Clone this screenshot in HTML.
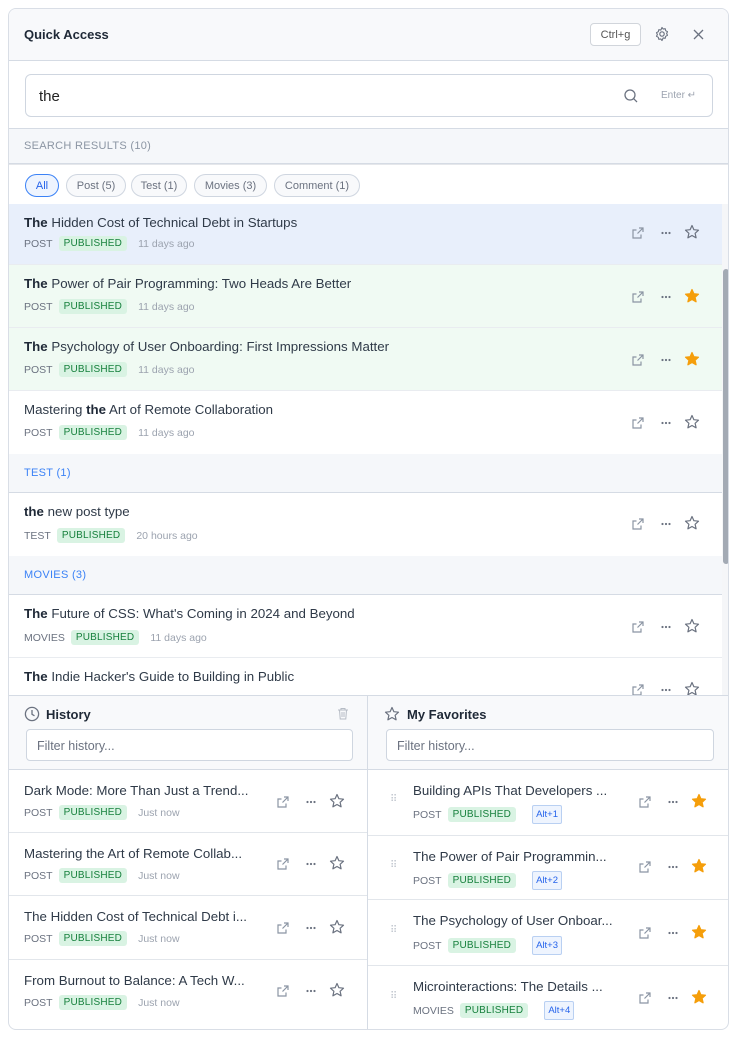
<!DOCTYPE html>
<html><head><meta charset="utf-8"><style>
*{box-sizing:border-box;margin:0;padding:0}
body{width:743px;height:1038px;background:#fff;font-family:"Liberation Sans",sans-serif;color:#374151;position:relative;overflow:hidden}
.panel{position:absolute;left:8px;top:8px;width:721px;height:1022px;border:1px solid #d9dee6;border-radius:8px;overflow:hidden;background:#fff}
.hdr{position:absolute;left:0;top:0;width:100%;height:52px;background:#f8f9fb;border-bottom:1px solid #d5dbe4}
.hdr .t{position:absolute;left:15px;top:18px;font-weight:bold;font-size:13px;color:#1f2937}
.kbd{position:absolute;left:581px;top:14px;width:51px;height:23px;border:1px solid #d1d5db;border-radius:4px;font-size:11px;color:#555;display:flex;align-items:center;justify-content:center;background:#fff}
.srch{position:absolute;left:0;top:52px;width:100%;height:68px;border-bottom:1px solid #d5dbe4}
.inp{position:absolute;left:16px;top:13px;width:688px;height:43px;border:1px solid #cfd6e0;border-radius:6px}
.inp .v{position:absolute;left:13px;top:13px;font-size:15px;color:#222}
.inp .e{position:absolute;left:635px;top:15px;font-size:10px;color:#9ca3af}
.sec{position:absolute;left:0;width:713px;background:#f5f7fa;border-bottom:1px solid #d5dbe4;font-size:11px;letter-spacing:.3px;padding-left:15px}
.chips{position:absolute;left:0;top:155px;width:100%;height:40px;border-top:1px solid #e5e7eb}
.chip{position:absolute;top:9px;height:23px;border:1px solid #cfd6e0;border-radius:12px;font-size:11px;color:#6b7280;display:flex;align-items:center;justify-content:center;background:#f8f9fb}
.row{position:absolute;left:0;width:713px;border-bottom:1px solid #e9ecf0}
.row .ti{position:absolute;left:15px;top:11px;font-size:13.3px;color:#2f3a48}
.row .ti b{color:#1f2937}
.meta{position:absolute;left:15px;font-size:10.5px;color:#6b7280;display:flex;align-items:center;gap:6px}
.pub{background:#d9f3e3;color:#16803c;font-size:10px;padding:2px 5px;border-radius:3px;letter-spacing:.2px}
.ago{color:#9ca3af;margin-left:5px}
.ic{position:absolute;width:14px;height:14px}
.half{position:absolute;top:686px;height:336px;border-top:1px solid #d5dbe4}
.hh{position:absolute;left:0;top:0;width:100%;height:74px;background:#f8f9fb;border-bottom:1px solid #d5dbe4}
.fi{position:absolute;top:33px;height:32px;border:1px solid #cfd6e0;border-radius:4px;background:#fff;font-size:12.5px;color:#6b7280;padding:9px 10px}
.hr{position:absolute;left:0;width:100%;border-bottom:1px solid #e2e6eb}
.hr .ti{position:absolute;left:15px;top:13px;font-size:13.3px;color:#2f3a48;white-space:nowrap}
.alt{border:1px solid #b9d0f2;background:#eef4fe;color:#2563eb;font-size:9.5px;padding:3px 3px;border-radius:2px;margin-left:10px}
</style></head><body>
<svg width="0" height="0" style="position:absolute"><defs>
<symbol id="ext" viewBox="0 0 14 14"><path d="M8 2h4v4M12 2L6.5 7.5M10 8.5V12H2V4h3.5" fill="none" stroke="#8b95a3" stroke-width="1.2"/></symbol>
<symbol id="dots" viewBox="0 0 14 14"><circle cx="3.5" cy="7" r="1.1" fill="#6b7280"/><circle cx="7" cy="7" r="1.1" fill="#6b7280"/><circle cx="10.5" cy="7" r="1.1" fill="#6b7280"/></symbol>
<symbol id="st" viewBox="0 0 16 16"><path d="M8 1.5l1.9 4.2 4.6.5-3.4 3.1 1 4.5L8 11.5l-4.1 2.3 1-4.5L1.5 6.2l4.6-.5z" fill="none" stroke="#6b7280" stroke-width="1.2" stroke-linejoin="round"/></symbol>
<symbol id="sf" viewBox="0 0 16 16"><path d="M8 1.5l1.9 4.2 4.6.5-3.4 3.1 1 4.5L8 11.5l-4.1 2.3 1-4.5L1.5 6.2l4.6-.5z" fill="#f59e0b" stroke="#f59e0b" stroke-width="1.2" stroke-linejoin="round"/></symbol>
</defs></svg>
<div class="panel">
<div class="hdr"><div class="t">Quick Access</div><div class="kbd">Ctrl+g</div>
<svg style="position:absolute;left:645px;top:17px" width="16" height="16" viewBox="0 0 16 16"><circle cx="8" cy="8" r="2.2" fill="none" stroke="#6b7280" stroke-width="1.2"/><path d="M8 1.5l1.2 1.6 2-.4.5 2 1.8 1-0.9 1.8.9 1.8-1.8 1-.5 2-2-.4L8 14.5l-1.2-1.6-2 .4-.5-2-1.8-1 .9-1.8-.9-1.8 1.8-1 .5-2 2 .4z" fill="none" stroke="#6b7280" stroke-width="1.1" stroke-linejoin="round"/></svg>
<svg style="position:absolute;left:684px;top:20px" width="11" height="11" viewBox="0 0 11 11"><path d="M1 1l9 9M10 1l-9 9" stroke="#6b7280" stroke-width="1.3"/></svg>
</div>
<div class="srch"><div class="inp"><div class="v">the</div>
<svg style="position:absolute;left:597px;top:13px" width="16" height="16" viewBox="0 0 16 16"><circle cx="7" cy="7" r="5" fill="none" stroke="#6b7280" stroke-width="1.3"/><path d="M10.7 10.7L14 14" stroke="#6b7280" stroke-width="1.3"/></svg>
<div class="e">Enter ↵</div></div></div>
<div class="sec" style="top:120px;height:35px;line-height:35px;color:#8b95a3;width:100%">SEARCH RESULTS (10)</div>
<div class="chips">
<div class="chip" style="left:16px;width:34px;border-color:#3b82f6;color:#2563eb;background:#eef4fe">All</div>
<div class="chip" style="left:57px;width:60px">Post (5)</div>
<div class="chip" style="left:122px;width:56px">Test (1)</div>
<div class="chip" style="left:185px;width:73px">Movies (3)</div>
<div class="chip" style="left:265px;width:86px">Comment (1)</div>
</div>
<div class="row" style="top:195px;height:61px;background:#e8effb"><div class="ti"><b>The</b> Hidden Cost of Technical Debt in Startups</div><div class="meta" style="top:32px">POST <span class="pub">PUBLISHED</span><span class="ago">11 days ago</span></div>
<svg class="ic" style="left:622px;top:22px"><use href="#ext"/></svg><svg class="ic" style="left:650px;top:22px"><use href="#dots"/></svg><svg class="ic" style="left:675px;top:20px;width:16px;height:16px"><use href="#st"/></svg></div>
<div class="row" style="top:256px;height:63px;background:#f0faf3"><div class="ti"><b>The</b> Power of Pair Programming: Two Heads Are Better</div><div class="meta" style="top:34px">POST <span class="pub">PUBLISHED</span><span class="ago">11 days ago</span></div>
<svg class="ic" style="left:622px;top:25px"><use href="#ext"/></svg><svg class="ic" style="left:650px;top:25px"><use href="#dots"/></svg><svg class="ic" style="left:675px;top:23px;width:16px;height:16px"><use href="#sf"/></svg></div>
<div class="row" style="top:319px;height:63px;background:#f0faf3"><div class="ti"><b>The</b> Psychology of User Onboarding: First Impressions Matter</div><div class="meta" style="top:34px">POST <span class="pub">PUBLISHED</span><span class="ago">11 days ago</span></div>
<svg class="ic" style="left:622px;top:25px"><use href="#ext"/></svg><svg class="ic" style="left:650px;top:25px"><use href="#dots"/></svg><svg class="ic" style="left:675px;top:23px;width:16px;height:16px"><use href="#sf"/></svg></div>
<div class="row" style="top:382px;height:63px;border:none"><div class="ti">Mastering <b>the</b> Art of Remote Collaboration</div><div class="meta" style="top:34px">POST <span class="pub">PUBLISHED</span><span class="ago">11 days ago</span></div>
<svg class="ic" style="left:622px;top:25px"><use href="#ext"/></svg><svg class="ic" style="left:650px;top:25px"><use href="#dots"/></svg><svg class="ic" style="left:675px;top:23px;width:16px;height:16px"><use href="#st"/></svg></div>
<div class="sec" style="top:445px;height:39px;line-height:39px;color:#3b82f6">TEST (1)</div>
<div class="row" style="top:484px;height:63px;border:none"><div class="ti"><b>the</b> new post type</div><div class="meta" style="top:35px">TEST <span class="pub">PUBLISHED</span><span class="ago">20 hours ago</span></div>
<svg class="ic" style="left:622px;top:24px"><use href="#ext"/></svg><svg class="ic" style="left:650px;top:24px"><use href="#dots"/></svg><svg class="ic" style="left:675px;top:22px;width:16px;height:16px"><use href="#st"/></svg></div>
<div class="sec" style="top:547px;height:39px;line-height:39px;color:#3b82f6">MOVIES (3)</div>
<div class="row" style="top:586px;height:63px"><div class="ti"><b>The</b> Future of CSS: What's Coming in 2024 and Beyond</div><div class="meta" style="top:35px">MOVIES <span class="pub">PUBLISHED</span><span class="ago">11 days ago</span></div>
<svg class="ic" style="left:622px;top:25px"><use href="#ext"/></svg><svg class="ic" style="left:650px;top:25px"><use href="#dots"/></svg><svg class="ic" style="left:675px;top:23px;width:16px;height:16px"><use href="#st"/></svg></div>
<div class="row" style="top:649px;height:40px;border:none"><div class="ti"><b>The</b> Indie Hacker's Guide to Building in Public</div>
<svg class="ic" style="left:622px;top:25px"><use href="#ext"/></svg><svg class="ic" style="left:650px;top:25px"><use href="#dots"/></svg><svg class="ic" style="left:675px;top:23px;width:16px;height:16px"><use href="#st"/></svg></div>
<div style="position:absolute;left:713px;top:195px;width:8px;height:491px;background:#f5f6f8"></div>
<div style="position:absolute;left:714px;top:260px;width:6px;height:295px;background:#a3aab4;border-radius:3px"></div>
<div class="half" style="left:0;width:359px;border-right:1px solid #d5dbe4">
<div class="hh">
<svg style="position:absolute;left:15px;top:10px" width="16" height="16" viewBox="0 0 16 16"><circle cx="8" cy="8" r="6.6" fill="none" stroke="#6b7280" stroke-width="1.3"/><path d="M8 4v4.3l2.5 1.5" fill="none" stroke="#6b7280" stroke-width="1.3"/></svg>
<div style="position:absolute;left:37px;top:11px;font-weight:bold;font-size:13px;color:#1f2937">History</div>
<svg style="position:absolute;left:328px;top:11px" width="12" height="13" viewBox="0 0 12 13"><path d="M1 3h10M4 3V1.5h4V3M2.5 3l.7 9h5.6l.7-9M5 5v5M7 5v5" fill="none" stroke="#b6bcc5" stroke-width="1"/></svg>
<div class="fi" style="left:17px;width:327px">Filter history...</div></div>
<div class="hr" style="top:74px;height:63px"><div class="ti">Dark Mode: More Than Just a Trend...</div><div class="meta" style="top:35px">POST <span class="pub">PUBLISHED</span><span class="ago">Just now</span></div>
<svg class="ic" style="left:267px;top:25px"><use href="#ext"/></svg><svg class="ic" style="left:295px;top:25px"><use href="#dots"/></svg><svg class="ic" style="left:320px;top:23px;width:16px;height:16px"><use href="#st"/></svg></div>
<div class="hr" style="top:137px;height:63px"><div class="ti">Mastering the Art of Remote Collab...</div><div class="meta" style="top:35px">POST <span class="pub">PUBLISHED</span><span class="ago">Just now</span></div>
<svg class="ic" style="left:267px;top:24px"><use href="#ext"/></svg><svg class="ic" style="left:295px;top:24px"><use href="#dots"/></svg><svg class="ic" style="left:320px;top:22px;width:16px;height:16px"><use href="#st"/></svg></div>
<div class="hr" style="top:200px;height:64px"><div class="ti">The Hidden Cost of Technical Debt i...</div><div class="meta" style="top:35px">POST <span class="pub">PUBLISHED</span><span class="ago">Just now</span></div>
<svg class="ic" style="left:267px;top:25px"><use href="#ext"/></svg><svg class="ic" style="left:295px;top:25px"><use href="#dots"/></svg><svg class="ic" style="left:320px;top:23px;width:16px;height:16px"><use href="#st"/></svg></div>
<div class="hr" style="top:264px;height:64px;border:none"><div class="ti">From Burnout to Balance: A Tech W...</div><div class="meta" style="top:35px">POST <span class="pub">PUBLISHED</span><span class="ago">Just now</span></div>
<svg class="ic" style="left:267px;top:24px"><use href="#ext"/></svg><svg class="ic" style="left:295px;top:24px"><use href="#dots"/></svg><svg class="ic" style="left:320px;top:22px;width:16px;height:16px"><use href="#st"/></svg></div>
</div>
<div class="half" style="left:359px;width:362px">
<div class="hh">
<svg style="position:absolute;left:16px;top:10px;width:16px;height:16px"><use href="#st"/></svg>
<div style="position:absolute;left:39px;top:11px;font-weight:bold;font-size:13px;color:#1f2937">My Favorites</div>
<div class="fi" style="left:18px;width:328px">Filter history...</div></div>
<div class="hr" style="top:74px;height:66px"><span style="position:absolute;left:22px;top:24px;color:#c2c7cf;font-size:10px">⠿</span><div class="ti" style="left:45px">Building APIs That Developers ...</div><div class="meta" style="top:35px;left:45px">POST <span class="pub">PUBLISHED</span><span class="alt">Alt+1</span></div>
<svg class="ic" style="left:270px;top:25px"><use href="#ext"/></svg><svg class="ic" style="left:298px;top:25px"><use href="#dots"/></svg><svg class="ic" style="left:323px;top:23px;width:16px;height:16px"><use href="#sf"/></svg></div>
<div class="hr" style="top:140px;height:64px"><span style="position:absolute;left:22px;top:24px;color:#c2c7cf;font-size:10px">⠿</span><div class="ti" style="left:45px">The Power of Pair Programmin...</div><div class="meta" style="top:35px;left:45px">POST <span class="pub">PUBLISHED</span><span class="alt">Alt+2</span></div>
<svg class="ic" style="left:270px;top:24px"><use href="#ext"/></svg><svg class="ic" style="left:298px;top:24px"><use href="#dots"/></svg><svg class="ic" style="left:323px;top:22px;width:16px;height:16px"><use href="#sf"/></svg></div>
<div class="hr" style="top:204px;height:66px"><span style="position:absolute;left:22px;top:25px;color:#c2c7cf;font-size:10px">⠿</span><div class="ti" style="left:45px">The Psychology of User Onboar...</div><div class="meta" style="top:36px;left:45px">POST <span class="pub">PUBLISHED</span><span class="alt">Alt+3</span></div>
<svg class="ic" style="left:270px;top:26px"><use href="#ext"/></svg><svg class="ic" style="left:298px;top:26px"><use href="#dots"/></svg><svg class="ic" style="left:323px;top:24px;width:16px;height:16px"><use href="#sf"/></svg></div>
<div class="hr" style="top:270px;height:66px;border:none"><span style="position:absolute;left:22px;top:25px;color:#c2c7cf;font-size:10px">⠿</span><div class="ti" style="left:45px">Microinteractions: The Details ...</div><div class="meta" style="top:35px;left:45px">MOVIES <span class="pub">PUBLISHED</span><span class="alt">Alt+4</span></div>
<svg class="ic" style="left:270px;top:25px"><use href="#ext"/></svg><svg class="ic" style="left:298px;top:25px"><use href="#dots"/></svg><svg class="ic" style="left:323px;top:23px;width:16px;height:16px"><use href="#sf"/></svg></div>
</div>
</div>
</body></html>
